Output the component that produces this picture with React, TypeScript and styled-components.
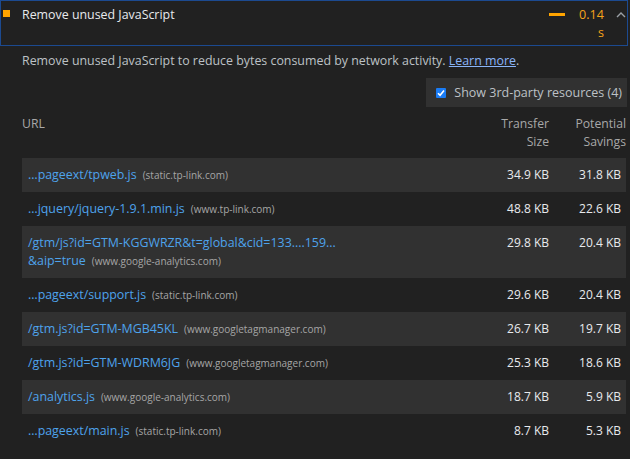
import React from "react";
import styled, { createGlobalStyle } from "styled-components";

const Global = createGlobalStyle`
  html, body { margin: 0; padding: 0; background: #212121; }
  body {
    font-family: "Open Sans", "Noto Sans", sans-serif;
    font-size: 12.4px;
    color: #e8eaed;
  }
`;

const Page = styled.div`
  width: 630px;
  height: 459px;
  overflow: hidden;
  background: #212121;
`;

const Header = styled.div`
  display: flex;
  align-items: flex-start;
  height: 44px;
  margin-right: 2px;
  border: 1px solid #1c4a90;
`;

const StatusIcon = styled.span`
  flex: none;
  width: 7px;
  height: 7px;
  margin: 9px 0 0 2px;
  background: #ffa400;
`;

const Title = styled.div`
  flex: 1;
  margin: 5px 0 0 12px;
  font-size: 12.4px;
  line-height: 18px;
  color: #e8eaed;
`;

const ScoreBar = styled.span`
  flex: none;
  width: 16px;
  height: 3px;
  margin-top: 12px;
  background: #ffa400;
`;

const Value = styled.div`
  display: flex;
  flex-direction: column;
  align-items: flex-end;
  margin: 5px 0 0 14px;
  font-size: 12.6px;
  line-height: 18px;
  color: #f5a31a;
`;

const Chevron = styled.svg`
  flex: none;
  margin: 10px 1px 0 12px;
`;

const Description = styled.p`
  margin: 6px 0 0;
  padding-left: 22px;
  font-size: 12.4px;
  line-height: 18px;
  color: #bdc1c6;
`;

const Link = styled.a`
  color: #8ab4f8;
  text-decoration: underline;
`;

const Toolbar = styled.div`
  display: flex;
  justify-content: flex-end;
  margin-top: 8px;
  padding-right: 3px;
`;

const ToggleBox = styled.label`
  display: flex;
  align-items: center;
  gap: 8px;
  height: 29px;
  padding: 0 5px 0 10px;
  background: #313131;
  font-size: 12.5px;
  color: #bdc1c6;
`;

const Check = styled.span`
  display: flex;
  align-items: center;
  justify-content: center;
  width: 10px;
  height: 10px;
  background: #1a7cf5;
  border-radius: 1px;
`;

const Table = styled.div`
  padding: 8px 4px 0 22px;
`;

const Cols = `
  display: grid;
  grid-template-columns: 1fr 77px 77px;
  line-height: 18px;
`;

const HeadRow = styled.div`
  ${Cols}
  margin-bottom: 7px;
  font-size: 12.2px;
  color: #a8a8a8;
`;

const HeadCell = styled.div<{ $right?: boolean }>`
  text-align: ${(p) => (p.$right ? "right" : "left")};
`;

const Row = styled.div<{ $striped: boolean; $tall?: boolean }>`
  ${Cols}
  height: ${(p) => (p.$tall ? 36 : 18)}px;
  padding: 8px 0;
  background: ${(p) => (p.$striped ? "#313131" : "transparent")};
  font-size: 12.4px;
`;

const UrlCell = styled.div`
  padding-left: 6px;
  color: #4ea3ec;
`;

const Domain = styled.span`
  margin-left: 6px;
  font-size: 10px;
  line-height: 10px;
  color: #a6a6a6;
`;

const NumCell = styled.div<{ $pad?: number }>`
  text-align: right;
  padding-right: ${(p) => p.$pad ?? 0}px;
  font-size: 12px;
  color: #e8eaed;
`;

type Item = { url: React.ReactNode; domain: string; size: string; savings: string; tall?: boolean };

const items: Item[] = [
  { url: "…pageext/tpweb.js", domain: "(static.tp-link.com)", size: "34.9 KB", savings: "31.8 KB" },
  { url: "…jquery/jquery-1.9.1.min.js", domain: "(www.tp-link.com)", size: "48.8 KB", savings: "22.6 KB" },
  {
    url: (
      <>
        /gtm/js?id=GTM-KGGWRZR&amp;t=global&amp;cid=133....159...
        <br />
        &amp;aip=true
      </>
    ),
    domain: "(www.google-analytics.com)",
    size: "29.8 KB",
    savings: "20.4 KB",
    tall: true,
  },
  { url: "…pageext/support.js", domain: "(static.tp-link.com)", size: "29.6 KB", savings: "20.4 KB" },
  { url: "/gtm.js?id=GTM-MGB45KL", domain: "(www.googletagmanager.com)", size: "26.7 KB", savings: "19.7 KB" },
  { url: "/gtm.js?id=GTM-WDRM6JG", domain: "(www.googletagmanager.com)", size: "25.3 KB", savings: "18.6 KB" },
  { url: "/analytics.js", domain: "(www.google-analytics.com)", size: "18.7 KB", savings: "5.9 KB" },
  { url: "…pageext/main.js", domain: "(static.tp-link.com)", size: "8.7 KB", savings: "5.3 KB" },
];

export default function App() {
  return (
    <Page>
      <Global />
      <Header>
        <StatusIcon />
        <Title>Remove unused JavaScript</Title>
        <ScoreBar />
        <Value>
          <span>0.14</span>
          <span>s</span>
        </Value>
        <Chevron width="10" height="7" viewBox="0 0 10 7">
          <polyline points="1,6 5,2 9,6" fill="none" stroke="#9aa0a6" strokeWidth="1.4" />
        </Chevron>
      </Header>
      <Description>
        Remove unused JavaScript to reduce bytes consumed by network activity. <Link>Learn more</Link>.
      </Description>
      <Toolbar>
        <ToggleBox>
          <Check>
            <svg width="8" height="8" viewBox="0 0 8 8">
              <polyline points="1,4.2 3.1,6.3 7,1.6" fill="none" stroke="#fff" strokeWidth="1.6" />
            </svg>
          </Check>
          Show 3rd-party resources (4)
        </ToggleBox>
      </Toolbar>
      <Table>
        <HeadRow>
          <HeadCell>URL</HeadCell>
          <HeadCell $right>
            Transfer
            <br />
            Size
          </HeadCell>
          <HeadCell $right>
            Potential
            <br />
            Savings
          </HeadCell>
        </HeadRow>
        {items.map((it, i) => (
          <Row key={i} $striped={i % 2 === 0} $tall={it.tall}>
            <UrlCell>
              {it.url}
              <Domain>{it.domain}</Domain>
            </UrlCell>
            <NumCell>{it.size}</NumCell>
            <NumCell $pad={5}>{it.savings}</NumCell>
          </Row>
        ))}
      </Table>
    </Page>
  );
}
